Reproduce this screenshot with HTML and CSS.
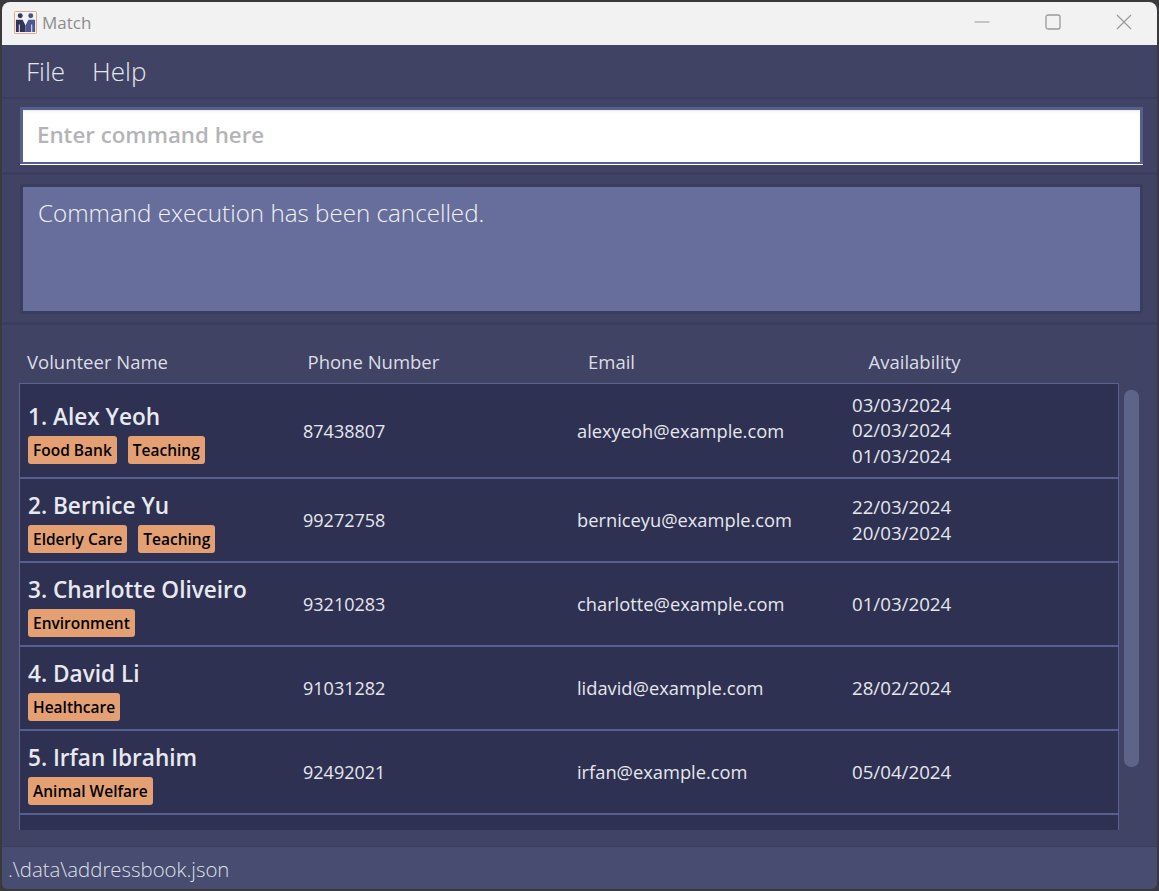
FILE: index.html
```html
<!DOCTYPE html>
<html lang="en">
<head>
    <meta charset="UTF-8">
    <title>Match</title>
    <link rel="stylesheet" href="styles.css">
</head>
<body>
<div class="window">
    <div class="titlebar">
        <svg class="app-icon" viewBox="0 0 24 24" width="23" height="23">
            <rect x="0.5" y="0.5" width="23" height="23" rx="1" fill="#f4f4f6" stroke="#dba57f"/>
            <circle cx="6.5" cy="5" r="2.6" fill="#33385f"/>
            <circle cx="17.5" cy="5" r="2.6" fill="#4a5286"/>
            <path d="M2 9h7l3 6v7H6V14l-1 0v8H2z" fill="#2f3458"/>
            <path d="M22 9h-7l-3 6v7h6V14l1 0v8h3z" fill="#4e5690"/>
        </svg>
        <span class="app-name">Match</span>
        <div class="win-controls">
            <svg viewBox="0 0 16 16" width="16" height="16"><path d="M0.5 8h15" stroke="#999" fill="none"/></svg>
            <svg viewBox="0 0 16 16" width="16" height="16"><rect x="1" y="1" width="14" height="14" rx="2" stroke="#999" stroke-width="1.3" fill="none"/></svg>
            <svg viewBox="0 0 16 16" width="16" height="16"><path d="M1 1l14 14M15 1L1 15" stroke="#999" stroke-width="1.2" fill="none"/></svg>
        </div>
    </div>

    <div class="menubar">
        <span>File</span>
        <span>Help</span>
    </div>

    <div class="command-pane">
        <div class="command-box">Enter command here</div>
    </div>

    <div class="result-pane">
        <div class="result-box">Command execution has been cancelled.</div>
    </div>

    <div class="list-pane">
        <div class="list-header">
            <span>Volunteer Name</span>
            <span>Phone Number</span>
            <span>Email</span>
            <span>Availability</span>
        </div>
        <div class="list-body">
            <div class="list">
                <div class="card card-tall">
                    <div class="who">
                        <div class="name">1. Alex Yeoh</div>
                        <div class="tags"><span class="tag">Food Bank</span><span class="tag">Teaching</span></div>
                    </div>
                    <div class="phone">87438807</div>
                    <div class="email">alexyeoh@example.com</div>
                    <div class="dates"><div>03/03/2024</div><div>02/03/2024</div><div>01/03/2024</div></div>
                </div>
                <div class="card">
                    <div class="who">
                        <div class="name">2. Bernice Yu</div>
                        <div class="tags"><span class="tag">Elderly Care</span><span class="tag">Teaching</span></div>
                    </div>
                    <div class="phone">99272758</div>
                    <div class="email">berniceyu@example.com</div>
                    <div class="dates"><div>22/03/2024</div><div>20/03/2024</div></div>
                </div>
                <div class="card">
                    <div class="who">
                        <div class="name">3. Charlotte Oliveiro</div>
                        <div class="tags"><span class="tag">Environment</span></div>
                    </div>
                    <div class="phone">93210283</div>
                    <div class="email">charlotte@example.com</div>
                    <div class="dates"><div>01/03/2024</div></div>
                </div>
                <div class="card">
                    <div class="who">
                        <div class="name">4. David Li</div>
                        <div class="tags"><span class="tag">Healthcare</span></div>
                    </div>
                    <div class="phone">91031282</div>
                    <div class="email">lidavid@example.com</div>
                    <div class="dates"><div>28/02/2024</div></div>
                </div>
                <div class="card">
                    <div class="who">
                        <div class="name">5. Irfan Ibrahim</div>
                        <div class="tags"><span class="tag">Animal Welfare</span></div>
                    </div>
                    <div class="phone">92492021</div>
                    <div class="email">irfan@example.com</div>
                    <div class="dates"><div>05/04/2024</div></div>
                </div>
            </div>
            <div class="scrollbar"><div class="thumb"></div></div>
        </div>
    </div>

    <div class="statusbar">.\data\addressbook.json</div>
</div>
</body>
</html>
```

FILE: styles.css
```css
html, body {
    height: 100%;
}
body {
    margin: 0;
    background-color: #3a3a3c;
    font-family: "Open Sans", "Noto Sans", sans-serif;
    overflow: hidden;
}
.window {
    box-sizing: border-box;
    width: 1155px;
    height: 887px;
    margin: 2px 0 0 2px;
    border-radius: 8px 8px 6px 6px;
    overflow: hidden;
    display: flex;
    flex-direction: column;
    background-color: #404364;
}
.titlebar {
    height: 43px;
    flex: none;
    background-color: #f2f2f2;
    display: flex;
    align-items: center;
    padding-left: 12px;
}
.app-icon {
    margin-right: 5px;
    margin-bottom: 2px;
}
.app-name {
    font-size: 17px;
    color: #8c8c8c;
    margin-bottom: 2px;
}
.win-controls {
    margin-left: auto;
    display: flex;
    align-items: center;
    gap: 55px;
    padding-right: 25px;
    margin-bottom: 4px;
}
.menubar {
    height: 54px;
    flex: none;
    box-sizing: border-box;
    display: flex;
    align-items: center;
    gap: 27px;
    padding-left: 24px;
    color: #e6e7ee;
    font-size: 26px;
    font-weight: 300;
    border-bottom: 2px solid #3a3d5d;
}
.command-pane {
    height: 76px;
    flex: none;
    box-sizing: border-box;
    padding: 8px 14px 0 18px;
    border-bottom: 3px solid #3a3d5d;
}
.command-box {
    box-sizing: border-box;
    height: 57px;
    padding: 0 0 0 14px;
    line-height: 50px;
    background-color: #fff;
    border: 3px solid #575f8f;
    border-bottom-width: 2px;
    box-shadow: 0 1px 0 #fff, inset 0 3px 3px -2px #e4e4e4;
    color: #b4b4b8;
    font-size: 22.3px;
    font-weight: 600;
}
.result-pane {
    height: 150px;
    flex: none;
    box-sizing: border-box;
    padding: 9px 14px 0 18px;
    border-bottom: 3px solid #3a3d5d;
}
.result-box {
    box-sizing: border-box;
    height: 130px;
    padding: 9px 15px;
    background-color: #676e9c;
    border: 3px solid #3a3d5f;
    color: #f1f2f7;
    font-size: 24.2px;
    font-weight: 300;
}
.list-pane {
    flex: 1;
    min-height: 0;
    display: flex;
    flex-direction: column;
    padding-left: 17px;
}
.list-header {
    height: 58px;
    flex: none;
    display: flex;
    align-items: flex-end;
    color: #dcdde6;
    font-size: 18.5px;
    padding-bottom: 7px;
    line-height: 29px;
    box-sizing: border-box;
}
.list-header span {
    width: 280.5px;
    padding-left: 8px;
    box-sizing: border-box;
}
.list-body {
    display: flex;
    height: 447px;
    flex: none;
}
.list {
    width: 1100px;
    box-sizing: border-box;
    border: 1px solid #5a6290;
    border-bottom: 0;
    background-color: #2e3151;
    overflow: hidden;
}
.card {
    height: 84px;
    box-sizing: border-box;
    border-bottom: 2px solid #575f8f;
    display: flex;
    align-items: center;
    color: #e6e7ee;
    font-size: 18.3px;
}
.card-tall {
    height: 95px;
}
.who {
    width: 283px;
    box-sizing: border-box;
    padding: 3px 0 0 8px;
}
.name {
    font-size: 22.6px;
    font-weight: 600;
    line-height: 31px;
    color: #e8e9f0;
    margin-bottom: 4px;
}
.tags {
    display: flex;
    gap: 11px;
}
.tag {
    height: 28px;
    line-height: 28px;
    padding: 0 5px;
    background-color: #e4a073;
    border-radius: 3px;
    color: #000;
    font-size: 15.5px;
    font-weight: 600;
}
.phone {
    width: 274px;
    font-size: 18px;
}
.email {
    width: 275px;
    margin-bottom: 1px;
}
.dates {
    font-size: 18.7px;
    line-height: 25.5px;
    padding-bottom: 1px;
}
.scrollbar {
    width: 15px;
    margin-left: 5px;
    padding-top: 7px;
}
.thumb {
    height: 377px;
    background-color: #5e6488;
    border-radius: 7px;
}
.statusbar {
    height: 43px;
    flex: none;
    box-sizing: border-box;
    padding-left: 6px;
    line-height: 44px;
    background-color: #474c70;
    border-top: 1px solid #3a3d5d;
    color: #dfe0e9;
    font-size: 20.4px;
    font-weight: 300;
}
```
